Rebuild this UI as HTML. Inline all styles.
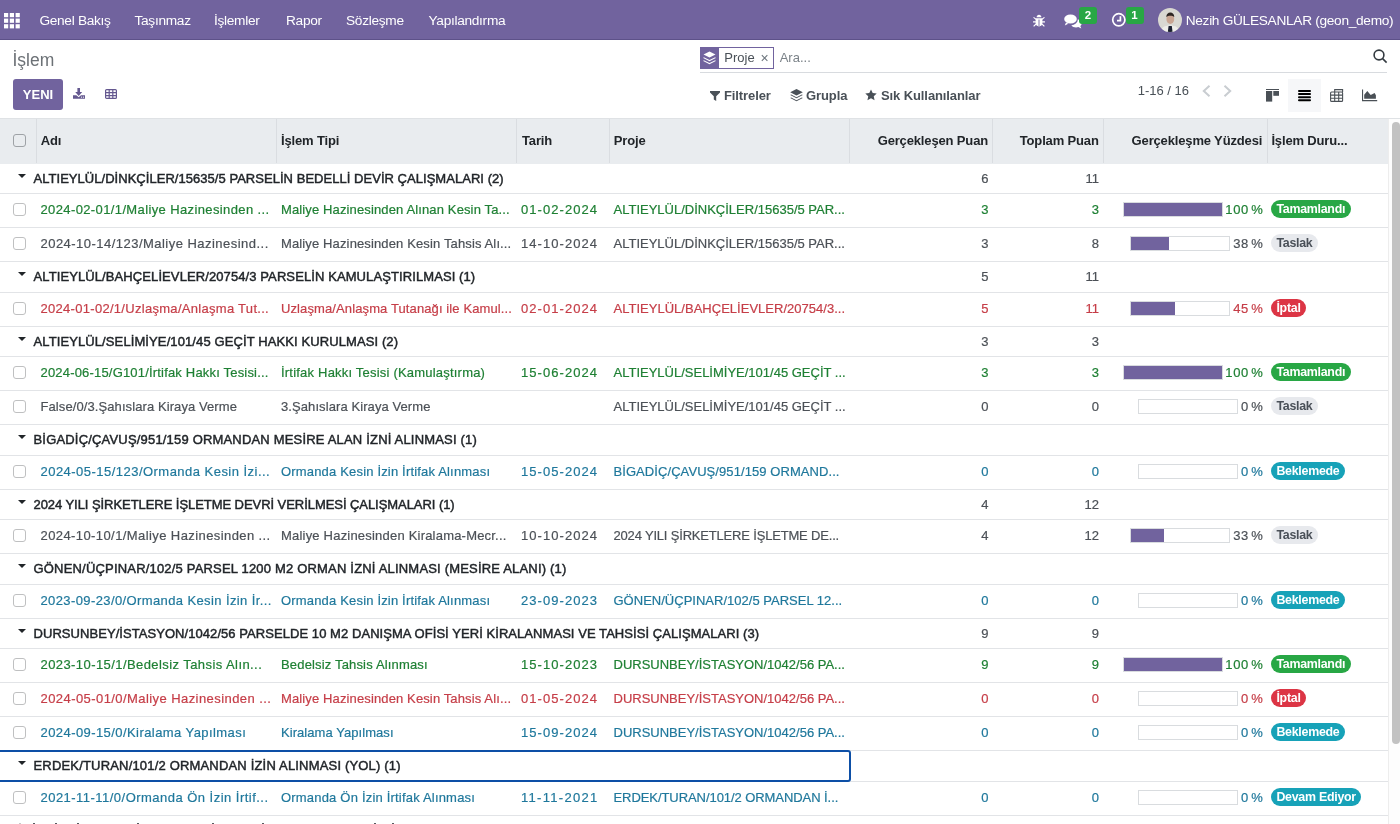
<!DOCTYPE html><html><head><meta charset="utf-8"><title>İşlem</title><style>
*{box-sizing:border-box}
html,body{margin:0;padding:0;width:1400px;height:824px;overflow:hidden;background:#fff;
font-family:"Liberation Sans",sans-serif;font-size:13px;color:#4c5157}
.a{position:absolute;white-space:nowrap}
.nav{position:absolute;left:0;top:0;width:1400px;height:40px;background:#71639e;border-bottom:1px solid #5d5189}
.nav .t{position:absolute;top:13px;line-height:16px;color:#fff;font-size:13.7px;letter-spacing:-0.3px}
.badge{position:absolute;height:16.5px;min-width:18px;background:#28a745;color:#fff;font-weight:bold;font-size:11.5px;line-height:17px;text-align:center;border-radius:3px}
.row{position:absolute;left:0;width:1388px;border-bottom:1px solid #e2e4e7}
.cb{position:absolute;left:13px;width:13px;height:13px;border:1px solid #bfc0c1;border-radius:3px;background:transparent}
.cell{position:absolute;white-space:nowrap;line-height:16px;-webkit-text-stroke:0.2px currentColor}
.num{position:absolute;text-align:right;white-space:nowrap;line-height:16px;-webkit-text-stroke:0.2px currentColor}
.grp{position:absolute;left:33.5px;white-space:nowrap;color:#212529;line-height:16px;-webkit-text-stroke:0.45px #212529}
.caret{position:absolute;left:17.5px;width:0;height:0;border-left:4px solid transparent;border-right:4px solid transparent;border-top:4.8px solid #212529}
.pbw{position:absolute;height:15px;display:flex;align-items:center;white-space:nowrap}
.pb{position:relative;height:15px;width:100px;border:1px solid #d9dcdf;background:#fff;margin-right:2.8px}
.pb i{position:absolute;left:0;top:0;bottom:0;background:#71639e}
.pbt{line-height:16px;-webkit-text-stroke:0.2px currentColor;letter-spacing:0.6px;word-spacing:-1.8px;margin-right:-0.6px}
.st{position:absolute;left:1271px;height:18px;line-height:18px;border-radius:9px;padding:0 5.4px;font-weight:bold;font-size:12.4px;letter-spacing:-0.26px;color:#fff;white-space:nowrap}
.th{position:absolute;top:133px;line-height:16px;font-weight:bold;color:#212529;white-space:nowrap;letter-spacing:-0.15px}
.vsep{position:absolute;top:119px;height:44px;width:1px;background:#dadde1}
</style></head><body><div id="pg" style="position:absolute;left:0;top:0;width:1400px;height:824px;background:#fff;overflow:hidden;will-change:transform">
<div class="nav">
<svg class="a" style="left:4px;top:13px" width="16" height="16" viewBox="0 0 16 16" fill="#fff"><rect x="0" y="0" width="4.2" height="4.2"/><rect x="0" y="5.6" width="4.2" height="4.2"/><rect x="0" y="11.2" width="4.2" height="4.2"/><rect x="5.8" y="0" width="4.2" height="4.2"/><rect x="5.8" y="5.6" width="4.2" height="4.2"/><rect x="5.8" y="11.2" width="4.2" height="4.2"/><rect x="11.6" y="0" width="4.2" height="4.2"/><rect x="11.6" y="5.6" width="4.2" height="4.2"/><rect x="11.6" y="11.2" width="4.2" height="4.2"/></svg>
<span class="t" style="left:39.4px">Genel Bakış</span>
<span class="t" style="left:134.5px">Taşınmaz</span>
<span class="t" style="left:214px">İşlemler</span>
<span class="t" style="left:286px">Rapor</span>
<span class="t" style="left:346px">Sözleşme</span>
<span class="t" style="left:428.5px">Yapılandırma</span>
<svg class="a" style="left:1032.5px;top:13.5px" width="12" height="13" viewBox="0 0 12 13"><path d="M3.6 3.2C3.6 1.8 4.7 0.8 6 0.8s2.4 1 2.4 2.4z" fill="#fff"/><path d="M2.6 4.2h6.8v4.6c0 2.2-1.5 3.6-3.4 3.6S2.6 11 2.6 8.8z" fill="#fff"/><path d="M6 5.6v6.6" stroke="#71639e" stroke-width="0.9"/><path d="M2.8 5.2L0.9 3.6M9.2 5.2l1.9-1.6M2.6 7.9H0.3M9.4 7.9h2.3M2.9 10.2l-1.9 1.8M9.1 10.2l1.9 1.8" stroke="#fff" stroke-width="1.1" stroke-linecap="round"/></svg>
<svg class="a" style="left:1063.5px;top:13.8px" width="18" height="15" viewBox="0 0 18 15" fill="#fff"><ellipse cx="6.5" cy="5" rx="6.3" ry="4.6"/><path d="M2 8.5l-1.2 3 3.5-1.8z"/><path d="M13.8 5.2c2.3 0.8 3.8 2.4 3.8 4.2 0 1-.5 2-1.3 2.7l1 2.3-3-1.3c-.7.2-1.4.3-2.2.3-2 0-3.8-.8-4.8-2 3.6-.3 6.5-2.8 6.5-5.8z"/></svg>
<span class="badge" style="left:1079px;top:7px;width:18px">2</span>
<svg class="a" style="left:1111px;top:12px" width="16" height="16" viewBox="0 0 16 16" fill="none" stroke="#fff" stroke-width="1.7"><circle cx="7.8" cy="7.8" r="6.1"/><path d="M9.4 4.2v4.4H6"/></svg>
<span class="badge" style="left:1125.5px;top:7px;width:18px">1</span>
<svg class="a" style="left:1158px;top:8px" width="24" height="24" viewBox="0 0 24 24"><defs><clipPath id="cc"><circle cx="12" cy="12" r="12"/></clipPath></defs><g clip-path="url(#cc)"><rect width="24" height="24" fill="#d9d8d2"/><path d="M3 24c0-4.5 3.5-6.5 9-6.5s9 2 9 6.5z" fill="#eeede9"/><path d="M9.8 24l.8-6h3.2l.8 6z" fill="#1c2130"/><ellipse cx="12.3" cy="11" rx="3.9" ry="4.9" fill="#c9a592"/><path d="M8.3 9.2c0-3 1.8-4.6 4-4.6s4 1.6 4 4.6c-1-1.1-2.3-1.5-4-1.5s-3 .4-4 1.5z" fill="#2e2622"/></g></svg>
<span class="t" style="left:1185.7px">Nezih GÜLESANLAR (geon_demo)</span>
</div>
<div class="a" style="left:12.5px;top:49px;font-size:17.5px;line-height:22px;color:#6c7176">İşlem</div>
<div class="a" style="left:13px;top:79px;width:50px;height:31px;background:#71639e;border-radius:3px;color:#fff;font-weight:bold;font-size:13px;line-height:31px;text-align:center">YENI</div>
<svg class="a" style="left:73px;top:88px" width="12" height="11" viewBox="0 0 12 11" fill="#64588f"><path d="M4.4 0h2.6v4.1h2.2L5.7 7.9 2.2 4.1h2.2z"/><path d="M0 7.2h3.4l2.3 2.1 2.3-2.1H12v3.6H0z"/><circle cx="8.5" cy="9.1" r=".65" fill="#fff"/><circle cx="10.5" cy="9.1" r=".65" fill="#fff"/></svg>
<svg class="a" style="left:105px;top:89px" width="12" height="10" viewBox="0 0 12 10" fill="none" stroke="#64588f" stroke-width="1.2"><rect x=".6" y=".6" width="10.8" height="8.8" rx="1"/><path d="M.6 3.6h10.8M.6 6.6h10.8M4.2 .6v8.8M7.8 .6v8.8"/></svg>
<div class="a" style="left:700px;top:47px;width:74px;height:22px;border:1px solid #71639e;"></div>
<div class="a" style="left:700px;top:47px;width:19px;height:22px;background:#71639e"></div>
<svg class="a" style="left:703px;top:51px" width="13" height="14" viewBox="0 0 13 14" fill="#fff"><path d="M6.5 0.5l6 3-6 3-6-3z"/><path d="M0.8 6.2l5.7 2.9 5.7-2.9 .6.9-6.3 3.2L.2 7.1z"/><path d="M0.8 9.2l5.7 2.9 5.7-2.9 .6.9-6.3 3.2L.2 10.1z"/></svg>
<span class="a" style="left:724.3px;top:50px;line-height:16px;color:#495057">Proje</span>
<span class="a" style="left:760.5px;top:50px;line-height:16px;color:#6c757d;font-size:14px">×</span>
<span class="a" style="left:779.7px;top:50px;line-height:16px;color:#7b8288">Ara...</span>
<div class="a" style="left:700px;top:72px;width:687px;height:1px;background:#d8dbdf"></div>
<svg class="a" style="left:1373px;top:49px" width="15" height="15" viewBox="0 0 15 15" fill="none" stroke="#333a40" stroke-width="1.6"><circle cx="6" cy="6" r="4.9"/><path d="M9.6 9.6l4 4"/></svg>
<svg class="a" style="left:710px;top:91px" width="10" height="10" viewBox="0 0 10 10" fill="#495057"><path d="M0 0h10v1.5L6.2 5.2v4.8L3.8 8.5V5.2L0 1.5z"/></svg>
<span class="a" style="left:724px;top:88px;line-height:16px;font-weight:bold;color:#495057;letter-spacing:-0.1px">Filtreler</span>
<svg class="a" style="left:790px;top:89px" width="13" height="13" viewBox="0 0 13 13" fill="#495057"><path d="M6.5 0l6.3 3.2-6.3 3.2L.2 3.2z"/><path d="M1.1 5.6l5.4 2.7 5.4-2.7 .9.5-6.3 3.2L.2 6.1z"/><path d="M1.1 8.6l5.4 2.7 5.4-2.7 .9.5-6.3 3.2L.2 9.1z"/></svg>
<span class="a" style="left:806px;top:88px;line-height:16px;font-weight:bold;color:#495057;letter-spacing:-0.1px">Grupla</span>
<svg class="a" style="left:865px;top:89px" width="12" height="12" viewBox="0 0 24 24" fill="#495057"><path d="M12 .8l3.4 7.3 8 .9-5.9 5.5 1.6 7.9L12 18.4l-7.1 4 1.6-7.9L.6 9l8-.9z"/></svg>
<span class="a" style="left:881px;top:88px;line-height:16px;font-weight:bold;color:#495057;letter-spacing:-0.1px">Sık Kullanılanlar</span>
<span class="a" style="left:1137.7px;top:83px;line-height:16px;color:#495057">1-16 / 16</span>
<svg class="a" style="left:1202px;top:85px" width="30" height="12" viewBox="0 0 30 12" fill="none" stroke="#c9cdd1" stroke-width="2"><path d="M7.5 0.8L1.8 6l5.7 5.2M22.5 0.8l5.7 5.2-5.7 5.2"/></svg>
<div class="a" style="left:1288px;top:79px;width:33px;height:33px;background:#f6f7f9"></div>
<svg class="a" style="left:1266px;top:89px" width="14" height="13" viewBox="0 0 14 13" fill="#4a5056"><rect x="0" y="0" width="13" height="1"/><rect x="0" y="2" width="6.2" height="10.6"/><rect x="7.3" y="2" width="5.7" height="4.8"/></svg>
<svg class="a" style="left:1298px;top:90px" width="14" height="12" viewBox="0 0 14 12" fill="#000"><rect x="0" y="0" width="13" height="2" rx="1"/><rect x="0" y="3.1" width="13" height="2" rx="1"/><rect x="0" y="6.2" width="13" height="2" rx="1"/><rect x="0" y="9.3" width="13" height="2" rx="1"/></svg>
<svg class="a" style="left:1330px;top:89px" width="14" height="13" viewBox="0 0 14 13" fill="none" stroke="#4a5056" stroke-width="1.1"><path d="M4.7 3V0.6h7.9v2.4"/><rect x=".6" y="3" width="12" height="9.4" rx="1"/><path d="M.6 6.1h12M.6 9.2h12M4.7 3v9.4M8.7 3v9.4"/></svg>
<svg class="a" style="left:1362px;top:89px" width="16" height="13" viewBox="0 0 16 13" fill="#4a5056"><path d="M0 0.5h1.1v10.6H15.2v1.1H0z"/><path d="M2.2 9.8V5.8L5.3 2 8.7 5.9 12.6 3.9 13.9 6.2V9.8z"/></svg>
<div class="a" style="left:0;top:118px;width:1400px;height:1px;background:#dfe2e5"></div>
<div class="a" style="left:0;top:119px;width:1388px;height:44.5px;background:#e9ecef"></div>
<div class="vsep" style="left:36px"></div>
<div class="vsep" style="left:276px"></div>
<div class="vsep" style="left:516px"></div>
<div class="vsep" style="left:609px"></div>
<div class="vsep" style="left:849px"></div>
<div class="vsep" style="left:992px"></div>
<div class="vsep" style="left:1103px"></div>
<div class="vsep" style="left:1267px"></div>
<div class="cb" style="top:134px;left:13px;border-color:#9ea2a6"></div>
<span class="th" style="left:40.75px">Adı</span>
<span class="th" style="left:281px">İşlem Tipi</span>
<span class="th" style="left:522px">Tarih</span>
<span class="th" style="left:613.75px">Proje</span>
<span class="th" style="right:412px">Gerçekleşen Puan</span>
<span class="th" style="right:301.25px">Toplam Puan</span>
<span class="th" style="right:137.8px">Gerçekleşme Yüzdesi</span>
<span class="th" style="left:1271.4px">İşlem Duru...</span>
<div class="row" style="top:164px;height:30px"></div>
<div class="caret" style="top:173.5px"></div>
<span class="grp" style="top:170.5px;letter-spacing:0.037px">ALTIEYLÜL/DİNKÇİLER/15635/5 PARSELİN BEDELLİ DEVİR ÇALIŞMALARI (2)</span>
<span class="num" style="right:411.5px;top:170.5px;color:#4c5157">6</span>
<span class="num" style="right:301px;top:170.5px;color:#4c5157">11</span>
<div class="row" style="top:194px;height:34px"></div>
<div class="cb" style="top:203px"></div>
<span class="cell" style="left:40.5px;top:201.5px;color:#1f8034;letter-spacing:0.378px">2024-02-01/1/Maliye Hazinesinden ...</span>
<span class="cell" style="left:281px;top:201.5px;color:#1f8034;letter-spacing:0.13px">Maliye Hazinesinden Alınan Kesin Ta...</span>
<span class="cell" style="left:521px;top:201.5px;color:#1f8034;letter-spacing:1.067px">01-02-2024</span>
<span class="cell" style="left:613.5px;top:201.5px;color:#1f8034;letter-spacing:-0.0px">ALTIEYLÜL/DİNKÇİLER/15635/5 PAR...</span>
<span class="num" style="right:411.5px;top:201.5px;color:#1f8034">3</span>
<span class="num" style="right:301px;top:201.5px;color:#1f8034">3</span>
<div class="pbw" style="right:137.2px;top:202px;color:#1f8034"><div class="pb"><i style="width:100%"></i></div><span class="pbt">100 %</span></div>
<span class="st" style="top:200px;background:#28a745;color:#fff">Tamamlandı</span>
<div class="row" style="top:228px;height:34px"></div>
<div class="cb" style="top:237px"></div>
<span class="cell" style="left:40.5px;top:235.5px;color:#4c5157;letter-spacing:0.471px">2024-10-14/123/Maliye Hazinesind...</span>
<span class="cell" style="left:281px;top:235.5px;color:#4c5157;letter-spacing:0.132px">Maliye Hazinesinden Kesin Tahsis Alı...</span>
<span class="cell" style="left:521px;top:235.5px;color:#4c5157;letter-spacing:1.067px">14-10-2024</span>
<span class="cell" style="left:613.5px;top:235.5px;color:#4c5157;letter-spacing:-0.0px">ALTIEYLÜL/DİNKÇİLER/15635/5 PAR...</span>
<span class="num" style="right:411.5px;top:235.5px;color:#4c5157">3</span>
<span class="num" style="right:301px;top:235.5px;color:#4c5157">8</span>
<div class="pbw" style="right:137.2px;top:236px;color:#4c5157"><div class="pb"><i style="width:38%"></i></div><span class="pbt">38 %</span></div>
<span class="st" style="top:234px;background:#e7e9ed;color:#4a5058">Taslak</span>
<div class="row" style="top:262px;height:31px"></div>
<div class="caret" style="top:271.5px"></div>
<span class="grp" style="top:268.5px;letter-spacing:0.098px">ALTIEYLÜL/BAHÇELİEVLER/20754/3 PARSELİN KAMULAŞTIRILMASI (1)</span>
<span class="num" style="right:411.5px;top:268.5px;color:#4c5157">5</span>
<span class="num" style="right:301px;top:268.5px;color:#4c5157">11</span>
<div class="row" style="top:293px;height:34px"></div>
<div class="cb" style="top:302px"></div>
<span class="cell" style="left:40.5px;top:300.5px;color:#c63e48;letter-spacing:0.294px">2024-01-02/1/Uzlaşma/Anlaşma Tut...</span>
<span class="cell" style="left:281px;top:300.5px;color:#c63e48;letter-spacing:0.111px">Uzlaşma/Anlaşma Tutanağı ile Kamul...</span>
<span class="cell" style="left:521px;top:300.5px;color:#c63e48;letter-spacing:1.067px">02-01-2024</span>
<span class="cell" style="left:613.5px;top:300.5px;color:#c63e48;letter-spacing:0.019px">ALTIEYLÜL/BAHÇELİEVLER/20754/3...</span>
<span class="num" style="right:411.5px;top:300.5px;color:#c63e48">5</span>
<span class="num" style="right:301px;top:300.5px;color:#c63e48">11</span>
<div class="pbw" style="right:137.2px;top:301px;color:#c63e48"><div class="pb"><i style="width:45%"></i></div><span class="pbt">45 %</span></div>
<span class="st" style="top:299px;background:#dc3545;color:#fff">İptal</span>
<div class="row" style="top:327px;height:30px"></div>
<div class="caret" style="top:336.5px"></div>
<span class="grp" style="top:333.5px;letter-spacing:0.104px">ALTIEYLÜL/SELİMİYE/101/45 GEÇİT HAKKI KURULMASI (2)</span>
<span class="num" style="right:411.5px;top:333.5px;color:#4c5157">3</span>
<span class="num" style="right:301px;top:333.5px;color:#4c5157">3</span>
<div class="row" style="top:357px;height:34px"></div>
<div class="cb" style="top:366px"></div>
<span class="cell" style="left:40.5px;top:364.5px;color:#1f8034;letter-spacing:0.184px">2024-06-15/G101/İrtifak Hakkı Tesisi...</span>
<span class="cell" style="left:281px;top:364.5px;color:#1f8034;letter-spacing:0.205px">İrtifak Hakkı Tesisi (Kamulaştırma)</span>
<span class="cell" style="left:521px;top:364.5px;color:#1f8034;letter-spacing:1.067px">15-06-2024</span>
<span class="cell" style="left:613.5px;top:364.5px;color:#1f8034;letter-spacing:-0.0px">ALTIEYLÜL/SELİMİYE/101/45 GEÇİT ...</span>
<span class="num" style="right:411.5px;top:364.5px;color:#1f8034">3</span>
<span class="num" style="right:301px;top:364.5px;color:#1f8034">3</span>
<div class="pbw" style="right:137.2px;top:365px;color:#1f8034"><div class="pb"><i style="width:100%"></i></div><span class="pbt">100 %</span></div>
<span class="st" style="top:363px;background:#28a745;color:#fff">Tamamlandı</span>
<div class="row" style="top:391px;height:34px"></div>
<div class="cb" style="top:400px"></div>
<span class="cell" style="left:40.5px;top:398.5px;color:#4c5157;letter-spacing:0.09px">False/0/3.Şahıslara Kiraya Verme</span>
<span class="cell" style="left:281px;top:398.5px;color:#4c5157;letter-spacing:0.087px">3.Şahıslara Kiraya Verme</span>
<span class="cell" style="left:521px;top:398.5px;color:#4c5157;letter-spacing:0px"></span>
<span class="cell" style="left:613.5px;top:398.5px;color:#4c5157;letter-spacing:-0.0px">ALTIEYLÜL/SELİMİYE/101/45 GEÇİT ...</span>
<span class="num" style="right:411.5px;top:398.5px;color:#4c5157">0</span>
<span class="num" style="right:301px;top:398.5px;color:#4c5157">0</span>
<div class="pbw" style="right:137.2px;top:399px;color:#4c5157"><div class="pb"><i style="width:0%"></i></div><span class="pbt">0 %</span></div>
<span class="st" style="top:397px;background:#e7e9ed;color:#4a5058">Taslak</span>
<div class="row" style="top:425px;height:31px"></div>
<div class="caret" style="top:434.5px"></div>
<span class="grp" style="top:431.5px;letter-spacing:0.183px">BİGADİÇ/ÇAVUŞ/951/159 ORMANDAN MESİRE ALAN İZNİ ALINMASI (1)</span>
<div class="row" style="top:456px;height:34px"></div>
<div class="cb" style="top:465px"></div>
<span class="cell" style="left:40.5px;top:463.5px;color:#1f789c;letter-spacing:0.471px">2024-05-15/123/Ormanda Kesin İzi...</span>
<span class="cell" style="left:281px;top:463.5px;color:#1f789c;letter-spacing:0.176px">Ormanda Kesin İzin İrtifak Alınması</span>
<span class="cell" style="left:521px;top:463.5px;color:#1f789c;letter-spacing:1.067px">15-05-2024</span>
<span class="cell" style="left:613.5px;top:463.5px;color:#1f789c;letter-spacing:0.074px">BİGADİÇ/ÇAVUŞ/951/159 ORMAND...</span>
<span class="num" style="right:411.5px;top:463.5px;color:#1f789c">0</span>
<span class="num" style="right:301px;top:463.5px;color:#1f789c">0</span>
<div class="pbw" style="right:137.2px;top:464px;color:#1f789c"><div class="pb"><i style="width:0%"></i></div><span class="pbt">0 %</span></div>
<span class="st" style="top:462px;background:#17a2b8;color:#fff">Beklemede</span>
<div class="row" style="top:490px;height:30px"></div>
<div class="caret" style="top:499.5px"></div>
<span class="grp" style="top:496.5px;letter-spacing:-0.058px">2024 YILI ŞİRKETLERE İŞLETME DEVRİ VERİLMESİ ÇALIŞMALARI (1)</span>
<span class="num" style="right:411.5px;top:496.5px;color:#4c5157">4</span>
<span class="num" style="right:301px;top:496.5px;color:#4c5157">12</span>
<div class="row" style="top:520px;height:34px"></div>
<div class="cb" style="top:529px"></div>
<span class="cell" style="left:40.5px;top:527.5px;color:#4c5157;letter-spacing:0.411px">2024-10-10/1/Maliye Hazinesinden ...</span>
<span class="cell" style="left:281px;top:527.5px;color:#4c5157;letter-spacing:0.205px">Maliye Hazinesinden Kiralama-Mecr...</span>
<span class="cell" style="left:521px;top:527.5px;color:#4c5157;letter-spacing:1.067px">10-10-2024</span>
<span class="cell" style="left:613.5px;top:527.5px;color:#4c5157;letter-spacing:-0.182px">2024 YILI ŞİRKETLERE İŞLETME DE...</span>
<span class="num" style="right:411.5px;top:527.5px;color:#4c5157">4</span>
<span class="num" style="right:301px;top:527.5px;color:#4c5157">12</span>
<div class="pbw" style="right:137.2px;top:528px;color:#4c5157"><div class="pb"><i style="width:33%"></i></div><span class="pbt">33 %</span></div>
<span class="st" style="top:526px;background:#e7e9ed;color:#4a5058">Taslak</span>
<div class="row" style="top:554px;height:31px"></div>
<div class="caret" style="top:563.5px"></div>
<span class="grp" style="top:560.5px;letter-spacing:0.186px">GÖNEN/ÜÇPINAR/102/5 PARSEL 1200 M2 ORMAN İZNİ ALINMASI (MESİRE ALANI) (1)</span>
<div class="row" style="top:585px;height:34px"></div>
<div class="cb" style="top:594px"></div>
<span class="cell" style="left:40.5px;top:592.5px;color:#1f789c;letter-spacing:0.389px">2023-09-23/0/Ormanda Kesin İzin İr...</span>
<span class="cell" style="left:281px;top:592.5px;color:#1f789c;letter-spacing:0.176px">Ormanda Kesin İzin İrtifak Alınması</span>
<span class="cell" style="left:521px;top:592.5px;color:#1f789c;letter-spacing:1.067px">23-09-2023</span>
<span class="cell" style="left:613.5px;top:592.5px;color:#1f789c;letter-spacing:0.012px">GÖNEN/ÜÇPINAR/102/5 PARSEL 12...</span>
<span class="num" style="right:411.5px;top:592.5px;color:#1f789c">0</span>
<span class="num" style="right:301px;top:592.5px;color:#1f789c">0</span>
<div class="pbw" style="right:137.2px;top:593px;color:#1f789c"><div class="pb"><i style="width:0%"></i></div><span class="pbt">0 %</span></div>
<span class="st" style="top:591px;background:#17a2b8;color:#fff">Beklemede</span>
<div class="row" style="top:619px;height:30px"></div>
<div class="caret" style="top:628.5px"></div>
<span class="grp" style="top:625.5px;letter-spacing:0.059px">DURSUNBEY/İSTASYON/1042/56 PARSELDE 10 M2 DANIŞMA OFİSİ YERİ KİRALANMASI VE TAHSİSİ ÇALIŞMALARI (3)</span>
<span class="num" style="right:411.5px;top:625.5px;color:#4c5157">9</span>
<span class="num" style="right:301px;top:625.5px;color:#4c5157">9</span>
<div class="row" style="top:649px;height:34px"></div>
<div class="cb" style="top:658px"></div>
<span class="cell" style="left:40.5px;top:656.5px;color:#1f8034;letter-spacing:0.423px">2023-10-15/1/Bedelsiz Tahsis Alın...</span>
<span class="cell" style="left:281px;top:656.5px;color:#1f8034;letter-spacing:0.165px">Bedelsiz Tahsis Alınması</span>
<span class="cell" style="left:521px;top:656.5px;color:#1f8034;letter-spacing:1.067px">15-10-2023</span>
<span class="cell" style="left:613.5px;top:656.5px;color:#1f8034;letter-spacing:0.0px">DURSUNBEY/İSTASYON/1042/56 PA...</span>
<span class="num" style="right:411.5px;top:656.5px;color:#1f8034">9</span>
<span class="num" style="right:301px;top:656.5px;color:#1f8034">9</span>
<div class="pbw" style="right:137.2px;top:657px;color:#1f8034"><div class="pb"><i style="width:100%"></i></div><span class="pbt">100 %</span></div>
<span class="st" style="top:655px;background:#28a745;color:#fff">Tamamlandı</span>
<div class="row" style="top:683px;height:34px"></div>
<div class="cb" style="top:692px"></div>
<span class="cell" style="left:40.5px;top:690.5px;color:#c63e48;letter-spacing:0.429px">2024-05-01/0/Maliye Hazinesinden ...</span>
<span class="cell" style="left:281px;top:690.5px;color:#c63e48;letter-spacing:0.126px">Maliye Hazinesinden Kesin Tahsis Alı...</span>
<span class="cell" style="left:521px;top:690.5px;color:#c63e48;letter-spacing:1.067px">01-05-2024</span>
<span class="cell" style="left:613.5px;top:690.5px;color:#c63e48;letter-spacing:0.0px">DURSUNBEY/İSTASYON/1042/56 PA...</span>
<span class="num" style="right:411.5px;top:690.5px;color:#c63e48">0</span>
<span class="num" style="right:301px;top:690.5px;color:#c63e48">0</span>
<div class="pbw" style="right:137.2px;top:691px;color:#c63e48"><div class="pb"><i style="width:0%"></i></div><span class="pbt">0 %</span></div>
<span class="st" style="top:689px;background:#dc3545;color:#fff">İptal</span>
<div class="row" style="top:717px;height:34px"></div>
<div class="cb" style="top:726px"></div>
<span class="cell" style="left:40.5px;top:724.5px;color:#1f789c;letter-spacing:0.427px">2024-09-15/0/Kiralama Yapılması</span>
<span class="cell" style="left:281px;top:724.5px;color:#1f789c;letter-spacing:0.058px">Kiralama Yapılması</span>
<span class="cell" style="left:521px;top:724.5px;color:#1f789c;letter-spacing:1.067px">15-09-2024</span>
<span class="cell" style="left:613.5px;top:724.5px;color:#1f789c;letter-spacing:0.0px">DURSUNBEY/İSTASYON/1042/56 PA...</span>
<span class="num" style="right:411.5px;top:724.5px;color:#1f789c">0</span>
<span class="num" style="right:301px;top:724.5px;color:#1f789c">0</span>
<div class="pbw" style="right:137.2px;top:725px;color:#1f789c"><div class="pb"><i style="width:0%"></i></div><span class="pbt">0 %</span></div>
<span class="st" style="top:723px;background:#17a2b8;color:#fff">Beklemede</span>
<div class="row" style="top:751px;height:31px"></div>
<div class="caret" style="top:760.5px"></div>
<span class="grp" style="top:757.5px;letter-spacing:0.179px">ERDEK/TURAN/101/2 ORMANDAN İZİN ALINMASI (YOL) (1)</span>
<div class="a" style="left:-3px;top:750px;width:854px;height:32px;border:2px solid #0d4fa6;border-radius:3px"></div>
<div class="row" style="top:782px;height:34px"></div>
<div class="cb" style="top:791px"></div>
<span class="cell" style="left:40.5px;top:789.5px;color:#1f789c;letter-spacing:0.472px">2021-11-11/0/Ormanda Ön İzin İrtif...</span>
<span class="cell" style="left:281px;top:789.5px;color:#1f789c;letter-spacing:0.194px">Ormanda Ön İzin İrtifak Alınması</span>
<span class="cell" style="left:521px;top:789.5px;color:#1f789c;letter-spacing:1.289px">11-11-2021</span>
<span class="cell" style="left:613.5px;top:789.5px;color:#1f789c;letter-spacing:-0.067px">ERDEK/TURAN/101/2 ORMANDAN İ...</span>
<span class="num" style="right:411.5px;top:789.5px;color:#1f789c">0</span>
<span class="num" style="right:301px;top:789.5px;color:#1f789c">0</span>
<div class="pbw" style="right:137.2px;top:790px;color:#1f789c"><div class="pb"><i style="width:0%"></i></div><span class="pbt">0 %</span></div>
<span class="st" style="top:788px;background:#17a2b8;color:#fff">Devam Ediyor</span>
<div class="row" style="top:816px;height:31px"></div>
<div class="caret" style="top:825.5px"></div>
<span class="grp" style="top:822.5px;letter-spacing:0px"></span>
<div class="a" style="left:33.3px;top:823px;width:2px;height:1px;background:#555a60"></div>
<div class="a" style="left:54.7px;top:823px;width:2px;height:1px;background:#555a60"></div>
<div class="a" style="left:76.9px;top:823px;width:2px;height:1px;background:#555a60"></div>
<div class="a" style="left:136.9px;top:823px;width:2px;height:1px;background:#555a60"></div>
<div class="a" style="left:212.4px;top:823px;width:2px;height:1px;background:#555a60"></div>
<div class="a" style="left:261.9px;top:823px;width:2px;height:1px;background:#555a60"></div>
<div class="a" style="left:374.3px;top:823px;width:2px;height:1px;background:#555a60"></div>
<div class="a" style="left:391.6px;top:823px;width:2px;height:1px;background:#555a60"></div>
<div class="a" style="left:18.5px;top:823px;width:2px;height:1px;background:#c8c8c8"></div>
<div class="a" style="left:1388px;top:119px;width:12px;height:705px;background:#fdfdfd;border-left:1px solid #ededed"></div>
<div class="a" style="left:1392px;top:122px;width:7.5px;height:622px;background:#c2c2c2;border-radius:4px"></div>
</div></body></html>
